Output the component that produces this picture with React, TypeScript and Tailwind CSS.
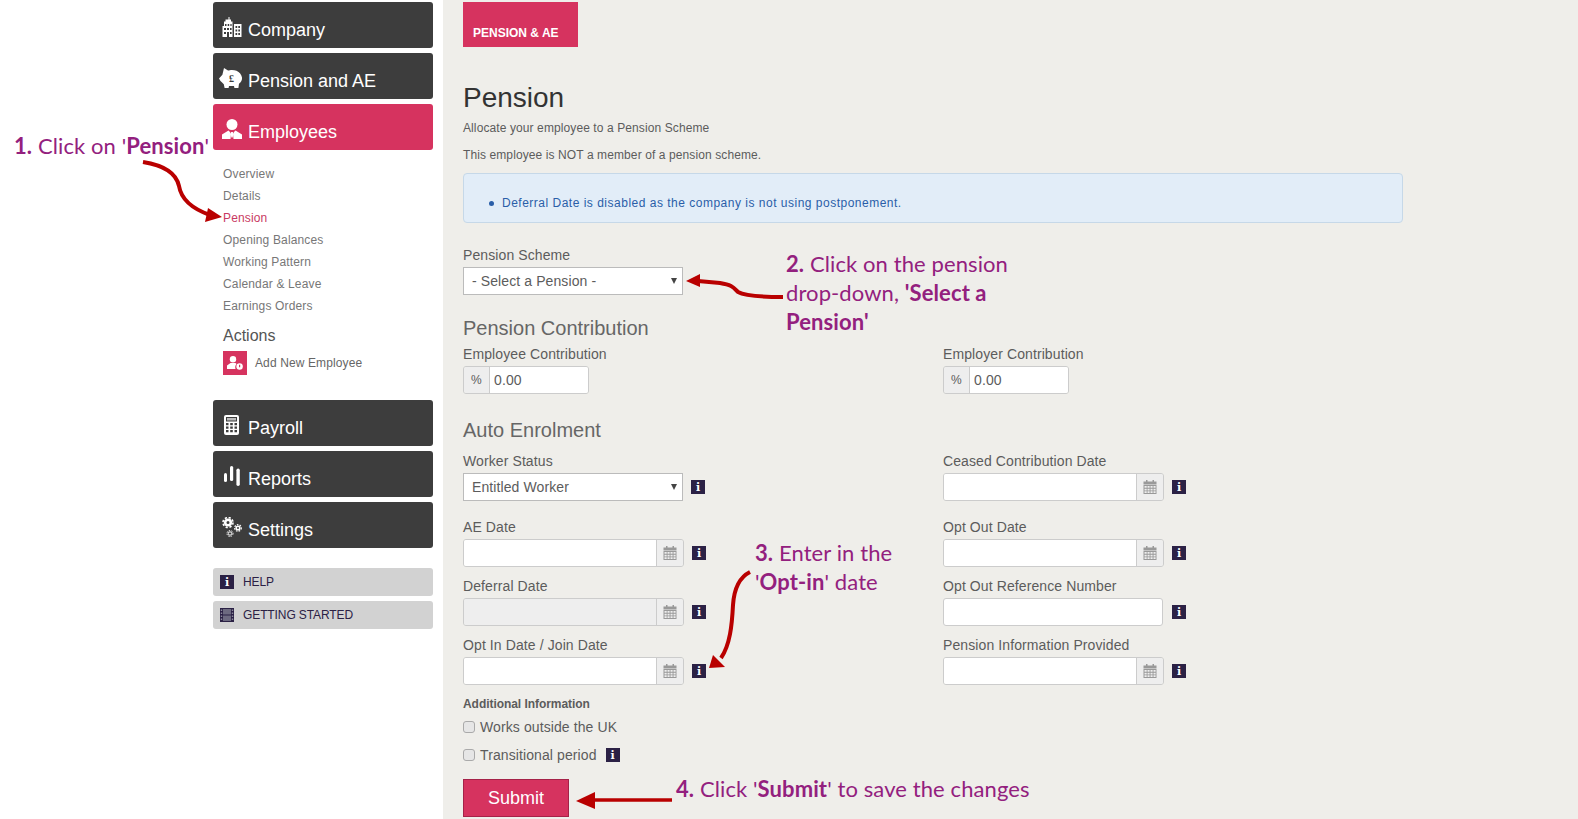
const SANS = "font-['Liberation_Sans',Arial,sans-serif]";

function CompanyIcon() {
  return (
    <svg width="20" height="20" viewBox="0 0 20 20" fill="#fff">
      <path fillRule="evenodd" d="M6.500 0h1v2.500h1.500v2h1.500V20H.5V9H2V4.500h1.500v-2h3zM3 7h1.500v2H3zm2.700 0h1.500v2H5.700zm2.700 0h1.200v2H8.400zM2 11h2v2H2zm3 0h2v2H5zm3 0h1.600v2H8zm-6 4h2v2H2zm3 0h2v5H5zm3 0h1.600v2H8z" />
      <path fillRule="evenodd" d="M12 7h7.500v13H12zm1.500 2v2h1.700V9zm2.800 0v2H18V9zm-2.800 3.500v2h1.700v-2zm2.800 0v2H18v-2zm-2.800 3.500v2h1.700v-2zm2.800 0v2H18v-2z" />
    </svg>
  );
}

function PiggyIcon() {
  return (
    <svg className="-ml-[2px]" width="24" height="21" viewBox="0 0 24 21">
      <path fill="#fff" d="M5 0l4 2.600C11 1.800 15 1.600 17.500 2.800c3 1.400 5 3.900 5.500 6.700.4 2.400-1 4.700-3 6.200l-.6 4.300h-4l-.4-2h-5l-.4 2h-4l-.8-3.800C3.600 15 2.500 13.800 1.500 13L0 10.400 3.400 6.800z" />
      <text x="12.500" y="14" textAnchor="middle" fontSize="10" fontWeight="700" fontFamily="'Liberation Serif',serif" fill="#3d3d3d">£</text>
    </svg>
  );
}

function PersonIcon() {
  return (
    <svg width="20" height="20" viewBox="0 0 20 20" fill="#fff">
      <circle cx="10" cy="5.500" r="5.500" />
      <path d="M6.500 11.500 0 15.500 0 20h8.500L9 15l-1-2zM13.500 11.500l6.500 4V20h-8.500L11 15l1-2z" />
      <path d="M9.200 13h1.600l.5 1.500-.6 4h-1.400l-.6-4z" />
    </svg>
  );
}

function CalculatorIcon() {
  return (
    <svg width="15" height="20" viewBox="0 0 15 20">
      <rect width="15" height="20" rx="2" fill="#fff" />
      <rect x="2" y="2" width="11" height="4.500" fill="#3d3d3d" />
      <rect x="3" y="3" width="9" height="2.500" fill="#bbb" />
      <path fill="#3d3d3d" d="M2 8h2.500v2.200H2zm4.200 0h2.600v2.200H6.200zm4.300 0H13v2.200h-2.500zM2 11.500h2.500v2.200H2zm4.200 0h2.600v2.200H6.200zm4.300 0H13v2.200h-2.500zM2 15h2.500v2.200H2zm4.200 0h2.600v2.200H6.200zm4.300 0H13v2.200h-2.500z" />
    </svg>
  );
}

function ReportsIcon() {
  return (
    <svg width="16" height="20" viewBox="0 0 16 20" fill="#fff">
      <rect x="0" y="7" width="3" height="9" rx="1.500" />
      <rect x="6" y="0" width="3.200" height="15" rx="1.600" />
      <rect x="12.400" y="2.500" width="3.400" height="17.500" rx="1.700" />
    </svg>
  );
}

function CogsIcon() {
  return (
    <svg width="20" height="20" viewBox="0 0 20 20" fill="none" stroke="#fff">
      <circle cx="6" cy="5.500" r="2.800" strokeWidth="2.600" />
      <circle cx="6" cy="5.500" r="5" strokeWidth="1.600" strokeDasharray="2.200 1.730" />
      <circle cx="16" cy="11" r="1.800" strokeWidth="1.600" />
      <circle cx="16" cy="11" r="3.300" strokeWidth="1.200" strokeDasharray="1.600 1.200" />
      <circle cx="8" cy="16.500" r="1.700" strokeWidth="1" />
      <circle cx="8" cy="16.500" r="3" strokeWidth="1" strokeDasharray="1.400 1.100" />
    </svg>
  );
}

function CalendarIcon() {
  return (
    <svg width="14" height="14" viewBox="0 0 14 14" fill="#999">
      <path d="M3 0h1.500v1.500H3zM9.500 0H11v1.500H9.500zM.5 1.500h13v3H.5z" />
      <path fillRule="evenodd" d="M.5 5h13v9H.5zM1.500 6v1.700h2.200V6zm3 0v1.700h2.100V6zm3 0v1.700h2.100V6zm3 0v1.700h2.100V6zm-9 2.700v1.800h2.200V8.700zm3 0v1.800h2.100V8.700zm3 0v1.800h2.100V8.700zm3 0v1.800h2.100V8.700zm-9 2.600V13h2.200v-1.700zm3 0V13h2.100v-1.700zm3 0V13h2.100v-1.700zm3 0V13h2.100v-1.700z" />
    </svg>
  );
}

function AddEmployeeIcon() {
  return (
    <svg width="16" height="14" viewBox="0 0 16 14" fill="#fff">
      <circle cx="6" cy="3.200" r="3.200" />
      <path d="M3.500 7 0 9.500V13h8.500c-.6-1.800-.2-3.900 1-5L8.500 7z" />
      <circle cx="12.600" cy="10.500" r="3.200" />
      <path d="M12 8.800h1.200v2.400H12z" fill="#d6335f" />
    </svg>
  );
}

function FilmIcon() {
  return (
    <svg width="14" height="14" viewBox="0 0 14 14">
      <rect width="14" height="14" fill="#2b2145" />
      <rect x="3" y="1" width="8" height="5.500" fill="#6d6a80" />
      <rect x="3" y="7.500" width="8" height="5.500" fill="#6d6a80" />
      <path fill="#8d8b9c" d="M.8 1.500h1.400v1.500H.8zm0 3h1.400V6H.8zm0 3h1.400V9H.8zm0 3h1.400V12H.8zm11-9h1.400V3h-1.400zm0 3h1.400V6h-1.400zm0 3h1.400V9h-1.400zm0 3h1.400V12h-1.400z" />
    </svg>
  );
}

function InfoBadge({ className = '' }: { className?: string }) {
  return (
    <span className={`flex h-[14px] w-[14px] shrink-0 items-center justify-center bg-[#2b2145] font-['DejaVu_Serif',serif] text-[11px] font-bold leading-none tracking-normal text-white ${className}`}>
      i
    </span>
  );
}

function NavButton({ icon, label, active }: { icon: React.ReactNode; label: string; active?: boolean }) {
  return (
    <div className={`flex h-[46px] items-center rounded-[3px] pt-[10px] text-[18px] leading-[24px] text-white ${active ? 'bg-[#d6335f]' : 'bg-[#3d3d3d]'}`}>
      <span className="-mt-[6px] flex w-[35px] shrink-0 justify-center pl-[2px]">{icon}</span>
      {label}
    </div>
  );
}

function GreyButton({ icon, label }: { icon: React.ReactNode; label: string }) {
  return (
    <div className="flex h-[28px] items-center gap-[9px] rounded-[3px] bg-[#d2d2d2] pl-[7px] text-[12px] tracking-[-0.1px] text-[#2b2145]">
      {icon}
      {label}
    </div>
  );
}

function Label({ children }: { children: React.ReactNode }) {
  return <label className="mb-[2px] block h-[20px] text-[14px] leading-[20px] text-[#5c5c5c]">{children}</label>;
}

function SelectBox({ value }: { value: string }) {
  return (
    <div className="relative h-[28px] w-[220px]">
      <select className="h-full w-full appearance-none rounded-none border border-[#bbb] bg-white pl-[8px] text-[14px] text-[#5c5c5c] outline-none">
        <option>{value}</option>
      </select>
      <span className="absolute right-[6px] top-[11px] h-0 w-0 border-x-[3px] border-t-[6px] border-x-transparent border-t-[#444]" />
    </div>
  );
}

function DateInput({ disabled }: { disabled?: boolean }) {
  return (
    <div className="flex h-[28px] w-[221px] overflow-hidden rounded-[3px] border border-[#ccc]">
      <input disabled={disabled} className={`min-w-0 flex-1 outline-none ${disabled ? 'bg-[#eee]' : 'bg-white'}`} />
      <span className="flex w-[27px] items-center justify-center border-l border-[#ccc] bg-[#eee]">
        <CalendarIcon />
      </span>
    </div>
  );
}

function DateField({ label, disabled }: { label: string; disabled?: boolean }) {
  return (
    <div>
      <Label>{label}</Label>
      <div className="flex items-center gap-[8px]">
        <DateInput disabled={disabled} />
        <InfoBadge />
      </div>
    </div>
  );
}

function PercentField({ label }: { label: string }) {
  return (
    <div>
      <Label>{label}</Label>
      <div className="flex h-[28px] w-[126px] overflow-hidden rounded-[3px] border border-[#ccc]">
        <span className="flex w-[26px] items-center justify-center border-r border-[#ccc] bg-[#eee] text-[12px] text-[#5c5c5c]">%</span>
        <input readOnly value="0.00" className="min-w-0 flex-1 bg-white pl-[4px] text-[14px] text-[#5c5c5c] outline-none" />
      </div>
    </div>
  );
}

function Checkbox() {
  return <input type="checkbox" className="h-[12px] w-[12px] appearance-none rounded-[3px] border border-[#aaa] bg-[#e6e6e6]" />;
}

function Sidebar() {
  const links = ['Overview', 'Details', 'Pension', 'Opening Balances', 'Working Pattern', 'Calendar & Leave', 'Earnings Orders'];
  return (
    <aside className="h-full w-[443px] shrink-0 bg-white pl-[213px] pr-[10px] pt-[2px]">
      <div className="flex flex-col gap-[5px]">
        <NavButton icon={<CompanyIcon />} label="Company" />
        <NavButton icon={<PiggyIcon />} label="Pension and AE" />
        <NavButton icon={<PersonIcon />} label="Employees" active />
      </div>
      <ul className="mt-[13px] pl-[10px] text-[12px] leading-[22px] tracking-[0.15px] text-[#777]">
        {links.map((link) => (
          <li key={link} className={link === 'Pension' ? 'text-[#c93a63]' : ''}>{link}</li>
        ))}
      </ul>
      <h4 className="mt-[7px] pl-[10px] text-[16px] leading-[24px] text-[#555]">Actions</h4>
      <div className="mt-[3px] flex items-center gap-[8px] pl-[10px] text-[12px] tracking-[0.12px] text-[#666]">
        <span className="flex h-[24px] w-[24px] items-center justify-center bg-[#d6335f]"><AddEmployeeIcon /></span>
        Add New Employee
      </div>
      <div className="mt-[25px] flex flex-col gap-[5px]">
        <NavButton icon={<CalculatorIcon />} label="Payroll" />
        <NavButton icon={<ReportsIcon />} label="Reports" />
        <NavButton icon={<CogsIcon />} label="Settings" />
      </div>
      <div className="mt-[20px] flex flex-col gap-[5px]">
        <GreyButton icon={<InfoBadge />} label="HELP" />
        <GreyButton icon={<FilmIcon />} label="GETTING STARTED" />
      </div>
    </aside>
  );
}

function Annotations() {
  const note = "absolute font-['Lato',sans-serif] text-[22px] leading-[29px] tracking-[0.1px] text-[#93207e]";
  return (
    <>
      <p className={`${note} left-[14px] top-[131px] whitespace-nowrap`}><b>1.</b> Click on '<b>Pension</b>'</p>
      <p className={`${note} left-[786px] top-[249px] w-[240px]`}><b>2.</b> Click on the pension drop-down, <b>'Select a Pension'</b></p>
      <p className={`${note} left-[755px] top-[538px] w-[160px]`}><b>3.</b> Enter in the '<b>Opt-in</b>' date</p>
      <p className={`${note} left-[676px] top-[774px] whitespace-nowrap`}><b>4.</b> Click '<b>Submit</b>' to save the changes</p>
      <svg className="pointer-events-none absolute left-0 top-0" width="1578" height="819" fill="none">
        <g stroke="#b90000" strokeWidth="4">
          <path d="M143 162C162 165 176 172 179 186C181 198 190 208 210 215" />
          <path d="M783 297C760 297 745 296 738 292C733 287 732 285 720 283L698 281" />
          <path d="M750 572C738 578 734 590 733 605C732 625 730 645 721 658" />
          <path d="M672 800H592" strokeWidth="3.500" />
        </g>
        <g fill="#b90000">
          <path d="M222 217 208 208 205 222z" />
          <path d="M686 281 700 274 700 287z" />
          <path d="M709 668 713 655 725 667z" />
          <path d="M576 801 595 792 595 809z" />
        </g>
      </svg>
    </>
  );
}

export default function App() {
  return (
    <div className={`relative flex h-[819px] w-[1578px] overflow-hidden bg-[#efeeea] ${SANS}`}>
      <Sidebar />
      <main className="flex-1 pl-[20px] pt-[2px] tracking-[0.1px]">
        <div className="flex h-[45px] w-[115px] items-end bg-[#d6335f] pb-[6px] pl-[10px] text-[12px] font-bold leading-[16px] tracking-normal text-white">
          PENSION &amp; AE
        </div>
        <h1 className="mt-[34px] text-[28px] leading-[34px] tracking-normal text-[#333]">Pension</h1>
        <p className="mt-[5px] text-[12px] leading-[17px] text-[#5c5c5c]">Allocate your employee to a Pension Scheme</p>
        <p className="mt-[10px] text-[12px] leading-[17px] text-[#5c5c5c]">This employee is NOT a member of a pension scheme.</p>
        <div className="mt-[9px] flex h-[50px] w-[940px] items-center rounded-[4px] border border-[#c6d8e8] bg-[#e2edf8] pl-[25px] pt-[10px] text-[12px] tracking-[0.5px] text-[#2a5ea8]">
          <span className="mr-[8px] h-[5px] w-[5px] rounded-full bg-[#2a5ea8]" />
          Deferral Date is disabled as the company is not using postponement.
        </div>

        <div className="mt-[22px]">
          <Label>Pension Scheme</Label>
          <SelectBox value="- Select a Pension -" />
        </div>

        <h3 className="mt-[21px] text-[20px] leading-[24px] tracking-normal text-[#666]">Pension Contribution</h3>
        <div className="mt-[4px] grid grid-cols-[480px_480px]">
          <PercentField label="Employee Contribution" />
          <PercentField label="Employer Contribution" />
        </div>

        <h3 className="mt-[24px] text-[20px] leading-[24px] tracking-normal text-[#666]">Auto Enrolment</h3>
        <div className="mt-[9px] grid grid-cols-[480px_480px]">
          <div>
            <Label>Worker Status</Label>
            <div className="flex items-center gap-[8px]">
              <SelectBox value="Entitled Worker" />
              <InfoBadge />
            </div>
          </div>
          <DateField label="Ceased Contribution Date" />
        </div>
        <div className="mt-[16px] grid grid-cols-[480px_480px]">
          <DateField label="AE Date" />
          <DateField label="Opt Out Date" />
        </div>
        <div className="mt-[9px] grid grid-cols-[480px_480px]">
          <DateField label="Deferral Date" disabled />
          <div>
            <Label>Opt Out Reference Number</Label>
            <div className="flex items-center gap-[8px]">
              <input className="h-[28px] w-[220px] rounded-[3px] border border-[#ccc] bg-white outline-none" />
              <InfoBadge className="ml-[1px]" />
            </div>
          </div>
        </div>
        <div className="mt-[9px] grid grid-cols-[480px_480px]">
          <DateField label="Opt In Date / Join Date" />
          <DateField label="Pension Information Provided" />
        </div>

        <p className="mt-[11px] text-[12px] font-bold leading-[16px] tracking-[-0.05px] text-[#5c5c5c]">Additional Information</p>
        <div className="mt-[5px] flex h-[20px] items-center gap-[5px] text-[14px] text-[#5c5c5c]">
          <Checkbox />
          Works outside the UK
        </div>
        <div className="mt-[8px] flex h-[20px] items-center gap-[5px] text-[14px] text-[#5c5c5c]">
          <Checkbox />
          Transitional period
          <InfoBadge className="ml-[4px]" />
        </div>
        <button className="mt-[14px] h-[38px] w-[106px] border border-[#a52248] bg-[#d6335f] text-[18px] tracking-normal text-white">Submit</button>
      </main>
      <Annotations />
    </div>
  );
}
